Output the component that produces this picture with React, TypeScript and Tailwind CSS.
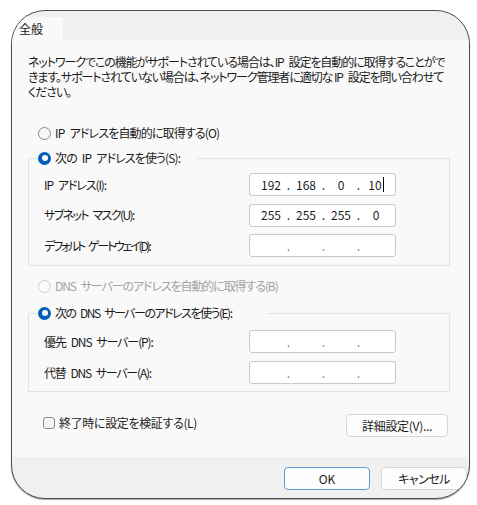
import { Fragment } from "react";

// Radio bullet drawn with css shapes
const Radio = ({ checked, disabled }: { checked?: boolean; disabled?: boolean }) =>
  checked ? (
    <span className="flex h-[13px] w-[13px] shrink-0 items-center justify-center rounded-full bg-[#005fb8]">
      <span className="h-[6px] w-[6px] rounded-full bg-white" />
    </span>
  ) : (
    <span
      className={`h-[13px] w-[13px] shrink-0 rounded-full border ${
        disabled ? "border-[#cdcdcd] bg-[#fbfbfb]" : "border-[#8a8a8a] bg-[#f6f6f6]"
      }`}
    />
  );

const IpField = ({ parts, caret }: { parts?: string[]; caret?: boolean }) => (
  <div className="flex h-[23px] w-[147px] items-center rounded-[3px] border border-[#c8c8c8] bg-white pl-[7px] text-[12px] tracking-normal text-[#1b1b1b]">
    {[0, 1, 2, 3].map((i) => (
      <Fragment key={i}>
        <span className="flex w-[28px] items-center justify-center">
          {parts ? parts[i] : ""}
          {caret && i === 3 && <span className="ml-px h-[15px] w-px bg-black" />}
        </span>
        {i < 3 && (
          <span className={`w-[7px] text-center ${parts ? "" : "text-[#6f85a8]"}`}>.</span>
        )}
      </Fragment>
    ))}
  </div>
);

const Row = ({ label, track, field }: { label: string; track: string; field: React.ReactNode }) => (
  <div className="flex h-[23px] items-center">
    <span className={`w-[205px] whitespace-pre ${track}`}>{label}</span>
    {field}
  </div>
);

// en space keeps a visible gap once tracking is tightened
const sp = "\u2002";

export default function App() {
  return (
    <div className="h-[505px] w-[477px] bg-white pl-[11px] pt-[10px] font-['Noto_Sans_CJK_JP','Noto_Sans',sans-serif] text-[12px] text-[#1b1b1b] [font-feature-settings:'palt']">
      <div className="flex h-[489px] w-[459px] flex-col overflow-hidden rounded-[34px] border-[1.5px] border-[#4d4d4d] bg-[#f0f0f0] shadow-[0_1px_1px_rgba(0,0,0,0.35)]">
        {/* Tab strip */}
        <div className="flex h-[29px] shrink-0 items-end">
          <div className="flex h-[23px] w-[51px] items-center bg-[#f9f9f9] pl-[7px]">全般</div>
        </div>

        {/* Panel */}
        <div className="flex-1 bg-[#f9f9f9] pl-[16px] pr-[19px] pt-[14px]">
          <p className="whitespace-pre leading-[15px] tracking-[-1.08px]">
            {`ネットワークでこの機能がサポートされている場合は、IP${sp}設定を自動的に取得することがで`}
            <br />
            {`きます。サポートされていない場合は、ネットワーク管理者に適切な IP${sp}設定を問い合わせて`}
            <br />
            ください。
          </p>

          <div className="ml-[10px] mt-[24px] flex h-[20px] items-center gap-[4px]">
            <Radio />
            <span className="whitespace-pre tracking-[-0.85px]">{`IP${sp}アドレスを自動的に取得する(O)`}</span>
          </div>

          <fieldset className="mt-[5px] border border-[#e3e3e3] pb-[8px]">
            <legend className="ml-[9px] flex h-[20px] w-[159px] items-center gap-[4px]">
              <Radio checked />
              <span className="whitespace-pre tracking-[-0.9px]">{`次の${sp}IP${sp}アドレスを使う(S):`}</span>
            </legend>
            <div className="mt-[5px] flex flex-col gap-[7.5px] pl-[15px]">
              <Row
                label={`IP${sp}アドレス(I):`}
                track="tracking-[-1.1px]"
                field={<IpField parts={["192", "168", "0", "10"]} caret />}
              />
              <Row
                label={`サブネット${sp}マスク(U):`}
                track="tracking-[-1.6px]"
                field={<IpField parts={["255", "255", "255", "0"]} />}
              />
              <Row label={`デフォルト${sp}ゲートウェイ(D):`} track="tracking-[-2.2px]" field={<IpField />} />
            </div>
          </fieldset>

          <div className="ml-[10px] mt-[10px] flex h-[20px] items-center gap-[4px] text-[#a3a3a3]">
            <Radio disabled />
            <span className="whitespace-pre tracking-[-1.1px]">{`DNS${sp}サーバーのアドレスを自動的に取得する(B)`}</span>
          </div>

          <fieldset className="mt-[7px] border border-[#e3e3e3] pb-[7px]">
            <legend className="ml-[9px] flex h-[20px] w-[229px] items-center gap-[4px]">
              <Radio checked />
              <span className="whitespace-pre tracking-[-1.5px]">{`次の${sp}DNS${sp}サーバーのアドレスを使う(E):`}</span>
            </legend>
            <div className="mt-[7px] flex flex-col gap-[8px] pl-[15px]">
              <Row label={`優先${sp}DNS${sp}サーバー(P):`} track="tracking-[-1.1px]" field={<IpField />} />
              <Row label={`代替${sp}DNS${sp}サーバー(A):`} track="tracking-[-1.2px]" field={<IpField />} />
            </div>
          </fieldset>

          <div className="mt-[22px] flex items-start justify-between pr-[2px]">
            <label className="ml-[15px] flex h-[17px] items-center gap-[4px]">
              <span className="h-[12px] w-[12px] rounded-[3px] border border-[#8a8a8a] bg-[#f6f6f6]" />
              <span className="tracking-[-0.35px]">終了時に設定を検証する(L)</span>
            </label>
            <button className="h-[23px] w-[102px] rounded-[4px] border border-[#d6d6d6] bg-[#fdfdfd] tracking-[-0.3px]">
              詳細設定(V)...
            </button>
          </div>
        </div>

        {/* Dialog buttons */}
        <div className="flex h-[41px] shrink-0 items-start justify-end gap-[11px] pr-[2px] pt-[10px]">
          <button className="h-[23px] w-[86px] rounded-[4px] border-[1.5px] border-[#5b9bd8] bg-[#fdfdfd]">
            OK
          </button>
          <button className="h-[23px] w-[86px] rounded-[4px] border border-[#d6d6d6] bg-[#fdfdfd] tracking-[-0.5px]">
            キャンセル
          </button>
        </div>
      </div>
    </div>
  );
}
